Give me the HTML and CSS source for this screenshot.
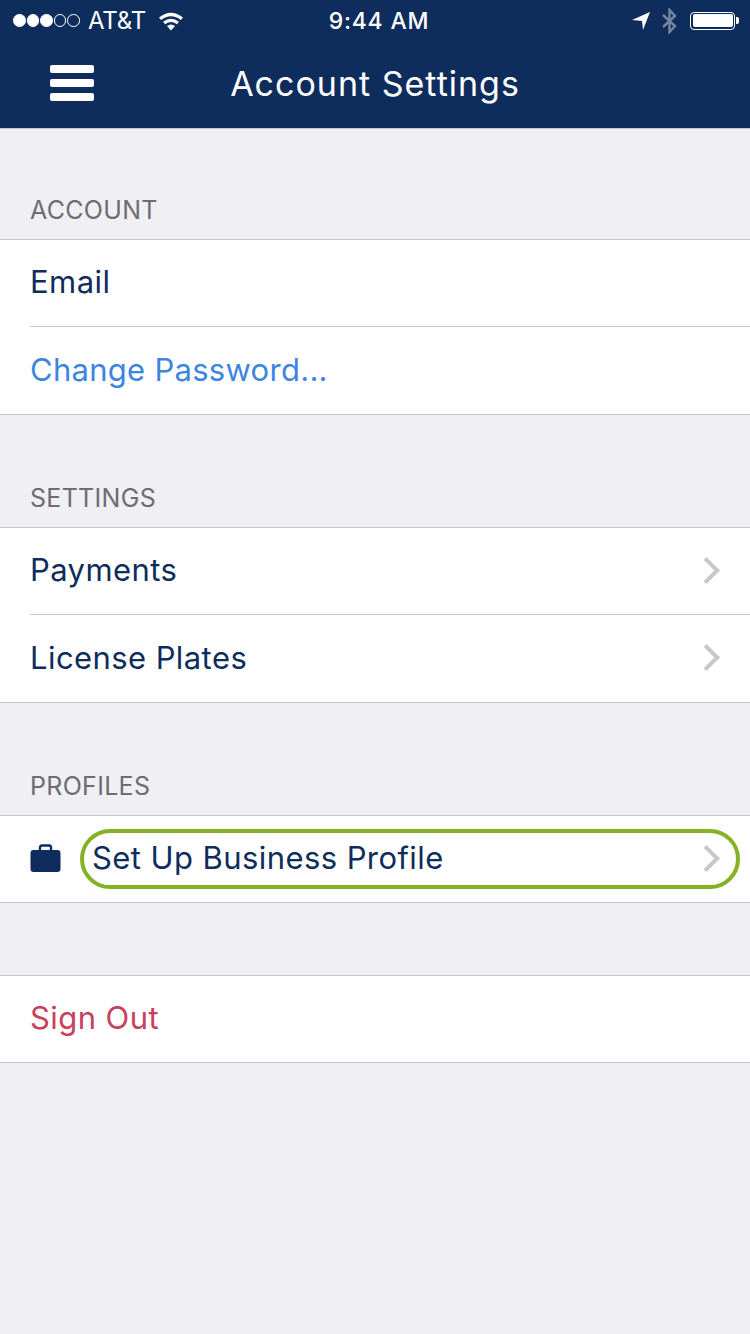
FILE: index.html
```html
<!DOCTYPE html>
<html lang="en">
<head>
    <meta charset="UTF-8">
    <meta name="viewport" content="width=device-width, initial-scale=1.0">
    <title>Account Settings</title>
    <link rel="stylesheet" href="styles.css">
</head>
<body>

<header class="top">
    <div class="status">
        <div class="status-left">
            <span class="signal">
                <i class="dot"></i><i class="dot"></i><i class="dot"></i><i class="dot off"></i><i class="dot off"></i>
            </span>
            <span class="carrier">AT&amp;T</span>
            <svg class="wifi" width="26" height="20" viewBox="0 0 26 20">
                <path d="M1 6.5 Q13 -3 25 6.5 L22.8 9 Q13 1.5 3.2 9 Z" fill="#fff"/>
                <path d="M5 10.8 Q13 4.5 21 10.8 L18.8 13.2 Q13 8.8 7.2 13.2 Z" fill="#fff"/>
                <path d="M9 15 Q13 12 17 15 L13 19.5 Z" fill="#fff"/>
            </svg>
        </div>
        <span class="clock">9:44 AM</span>
        <div class="status-right">
            <svg width="18" height="20" viewBox="0 0 18 20">
                <path d="M0 9 L18 1 L11 19 L10 10 Z" fill="#fff"/>
            </svg>
            <svg class="bt" width="17" height="26" viewBox="0 0 17 26">
                <path d="M2 7 L14 18 L8.5 24 V2 L14 8 L2 19" fill="none" stroke="#76859d" stroke-width="2.4"/>
            </svg>
            <div class="battery"><div class="battery-fill"></div></div>
            <div class="battery-tip"></div>
        </div>
    </div>
    <div class="nav">
        <div class="burger"><span></span><span></span><span></span></div>
        <h1>Account Settings</h1>
    </div>
</header>

<main>
    <section class="group">
        <h2>ACCOUNT</h2>
        <div class="rows">
            <div class="row"><span class="name">Email</span></div>
            <div class="row"><span class="name link">Change Password...</span></div>
        </div>
    </section>

    <section class="group">
        <h2>SETTINGS</h2>
        <div class="rows">
            <div class="row"><span class="name">Payments</span><i class="chev"></i></div>
            <div class="row"><span class="name">License Plates</span><i class="chev"></i></div>
        </div>
    </section>

    <section class="group">
        <h2>PROFILES</h2>
        <div class="rows">
            <div class="row business">
                <svg class="case" width="31" height="28" viewBox="0 0 31 28">
                    <path d="M10 7 V3.5 Q10 1.5 12 1.5 H19 Q21 1.5 21 3.5 V7" fill="none" stroke="#0f2d5c" stroke-width="2.4"/>
                    <rect x="0.5" y="6" width="30" height="22" rx="3" fill="#0f2d5c"/>
                </svg>
                <span class="name">Set Up Business Profile</span>
                <i class="chev"></i>
                <div class="ring"></div>
            </div>
        </div>
    </section>

    <section class="signout">
        <div class="rows">
            <div class="row"><span class="name danger">Sign Out</span></div>
        </div>
    </section>
</main>

</body>
</html>
```

FILE: styles.css
```css
body {
    font-family: Inter, "Liberation Sans", sans-serif;
    background-color: #efeff4;
    margin: 0;
    color: #0f2d5c;
}

.top {
    background-color: #0f2d5c;
    color: white;
    height: 128px;
    border-bottom: 1px solid #c8c8cc;
}

.status {
    height: 40px;
    padding: 1px 11px 0 13px;
    box-sizing: border-box;
    display: flex;
    align-items: center;
    justify-content: space-between;
    position: relative;
}

.status-left,
.status-right {
    display: flex;
    align-items: center;
    width: 240px;
}

.status-left {
    width: 246px;
}

.status-right {
    justify-content: flex-end;
}

.signal {
    display: flex;
    gap: 1px;
}

.dot {
    width: 12.6px;
    height: 12.6px;
    border-radius: 50%;
    background-color: white;
    border: 1px solid white;
    box-sizing: border-box;
}

.dot.off {
    background-color: transparent;
}

.carrier {
    font-size: 24px;
    margin-left: 8px;
    letter-spacing: -0.2px;
}

.wifi {
    margin-left: 12px;
}

.clock {
    font-size: 23px;
    font-weight: 500;
    letter-spacing: 0.8px;
}

.bt {
    margin-left: 11px;
    margin-right: 1px;
}

.battery {
    width: 45px;
    height: 18px;
    margin-left: 11px;
    border: 1.5px solid white;
    border-radius: 4px;
    padding: 1.5px;
    box-sizing: border-box;
}

.battery-fill {
    height: 100%;
    background-color: white;
    border-radius: 2px;
}

.battery-tip {
    width: 3px;
    height: 7px;
    margin-left: 1px;
    background-color: white;
    border-radius: 0 2px 2px 0;
}

.nav {
    height: 88px;
    display: flex;
    align-items: center;
    justify-content: center;
    position: relative;
}

.nav h1 {
    margin: 0 0 2px;
    font-size: 34px;
    font-weight: 400;
    letter-spacing: 1px;
}

.burger {
    position: absolute;
    left: 50px;
    top: 25px;
    width: 44px;
    display: flex;
    flex-direction: column;
    gap: 6px;
}

.burger span {
    height: 8px;
    background-color: white;
    border-radius: 2px;
}

.group {
    margin-top: 63px;
}

.group h2 {
    margin: 0;
    padding: 0 0 14px 30px;
    height: 47px;
    box-sizing: border-box;
    display: flex;
    align-items: flex-end;
    font-size: 25px;
    line-height: 30px;
    font-weight: 400;
    color: #6d6d72;
    letter-spacing: 0.3px;
}

.group + .group {
    margin-top: 65px;
}

.signout {
    margin-top: 72px;
}

.rows {
    background-color: white;
    border-top: 1px solid #c8c8cc;
    border-bottom: 1px solid #c8c8cc;
}

.row {
    height: 86px;
    margin-left: 30px;
    padding-right: 29px;
    display: flex;
    align-items: center;
    justify-content: space-between;
    position: relative;
}

.row + .row {
    height: 87px;
    border-top: 1px solid #c8c8cc;
}

.name {
    font-size: 31px;
    letter-spacing: 0.42px;
    margin-bottom: 4px;
}

.row + .row .name {
    margin-bottom: 2px;
}

.link {
    color: #3d85e0;
    letter-spacing: 0.28px;
}

.danger {
    color: #c9405c;
}

.chev {
    width: 15px;
    height: 15px;
    margin-right: 5px;
    margin-bottom: 2px;
    border-top: 4px solid #c7c7cc;
    border-right: 4px solid #c7c7cc;
    transform: rotate(45deg);
}

.business {
    justify-content: flex-start;
}

.case {
    margin-bottom: 2px;
}

.business .name {
    margin-left: 31px;
}

.business .chev {
    margin-left: auto;
}

.ring {
    position: absolute;
    left: 50px;
    right: 10px;
    top: 13px;
    height: 60px;
    box-sizing: border-box;
    border: 4px solid #84b224;
    border-radius: 30px;
}
```
